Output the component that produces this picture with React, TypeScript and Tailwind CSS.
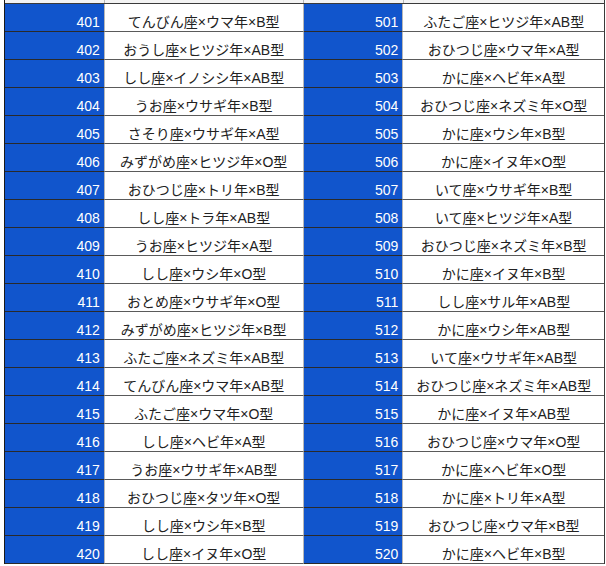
import React from 'react';

type Row = [number, string];

const leftRows: Row[] = [
  [401, 'てんびん座×ウマ年×B型'],
  [402, 'おうし座×ヒツジ年×AB型'],
  [403, 'しし座×イノシシ年×AB型'],
  [404, 'うお座×ウサギ年×B型'],
  [405, 'さそり座×ウサギ年×A型'],
  [406, 'みずがめ座×ヒツジ年×O型'],
  [407, 'おひつじ座×トリ年×B型'],
  [408, 'しし座×トラ年×AB型'],
  [409, 'うお座×ヒツジ年×A型'],
  [410, 'しし座×ウシ年×O型'],
  [411, 'おとめ座×ウサギ年×O型'],
  [412, 'みずがめ座×ヒツジ年×B型'],
  [413, 'ふたご座×ネズミ年×AB型'],
  [414, 'てんびん座×ウマ年×AB型'],
  [415, 'ふたご座×ウマ年×O型'],
  [416, 'しし座×ヘビ年×A型'],
  [417, 'うお座×ウサギ年×AB型'],
  [418, 'おひつじ座×タツ年×O型'],
  [419, 'しし座×ウシ年×B型'],
  [420, 'しし座×イヌ年×O型'],
];

const rightRows: Row[] = [
  [501, 'ふたご座×ヒツジ年×AB型'],
  [502, 'おひつじ座×ウマ年×A型'],
  [503, 'かに座×ヘビ年×A型'],
  [504, 'おひつじ座×ネズミ年×O型'],
  [505, 'かに座×ウシ年×B型'],
  [506, 'かに座×イヌ年×O型'],
  [507, 'いて座×ウサギ年×B型'],
  [508, 'いて座×ヒツジ年×A型'],
  [509, 'おひつじ座×ネズミ年×B型'],
  [510, 'かに座×イヌ年×B型'],
  [511, 'しし座×サル年×AB型'],
  [512, 'かに座×ウシ年×AB型'],
  [513, 'いて座×ウサギ年×AB型'],
  [514, 'おひつじ座×ネズミ年×AB型'],
  [515, 'かに座×イヌ年×AB型'],
  [516, 'おひつじ座×ウマ年×O型'],
  [517, 'かに座×ヘビ年×O型'],
  [518, 'かに座×トリ年×A型'],
  [519, 'おひつじ座×ウマ年×B型'],
  [520, 'かに座×ヘビ年×B型'],
];

function NumCell({ n }: { n: number }) {
  return (
    <div className="w-[100px] h-[28px] flex items-end justify-end pr-[4px] pb-[1px] bg-[#1155cc] border-b border-b-[#2a2a2a] border-r border-r-[#b7b7b7] text-white text-[14px] leading-[16px]">
      {n}
    </div>
  );
}

function NameCell({ text, w }: { text: string; w: string }) {
  return (
    <div className={`${w} h-[28px] flex items-end justify-center pb-[1px] bg-white border-b border-b-[#5a5a5a] border-r border-r-[#b7b7b7] text-[#222] text-[14px] leading-[16px] whitespace-nowrap`}>
      {text}
    </div>
  );
}

export default function App() {
  return (
    <div
      className="w-[606px] h-[566px] bg-white overflow-hidden pl-[4px]"
      style={{ fontFamily: '"Liberation Sans", "Noto Sans CJK JP", sans-serif' }}
    >
      <div className="w-[601px] border-l border-l-[#1a1a1a] border-r border-r-[#3a3a3a]">
        {/* header row, mostly cut off */}
        <div className="flex h-[4px] bg-[#f3f3f3] border-b border-b-[#3a3a3a]">
          <div className="w-[100px] border-r border-r-[#b7b7b7]" />
          <div className="w-[199px] border-r border-r-[#b7b7b7]" />
          <div className="w-[100px] border-r border-r-[#b7b7b7]" />
          <div className="flex-1" />
        </div>
        {leftRows.map(([ln, lt], i) => {
          const [rn, rt] = rightRows[i];
          return (
            <div key={ln} className="flex">
              <NumCell n={ln} />
              <NameCell text={lt} w="w-[199px]" />
              <NumCell n={rn} />
              <NameCell text={rt} w="w-[201px] border-r-0" />
            </div>
          );
        })}
      </div>
    </div>
  );
}
